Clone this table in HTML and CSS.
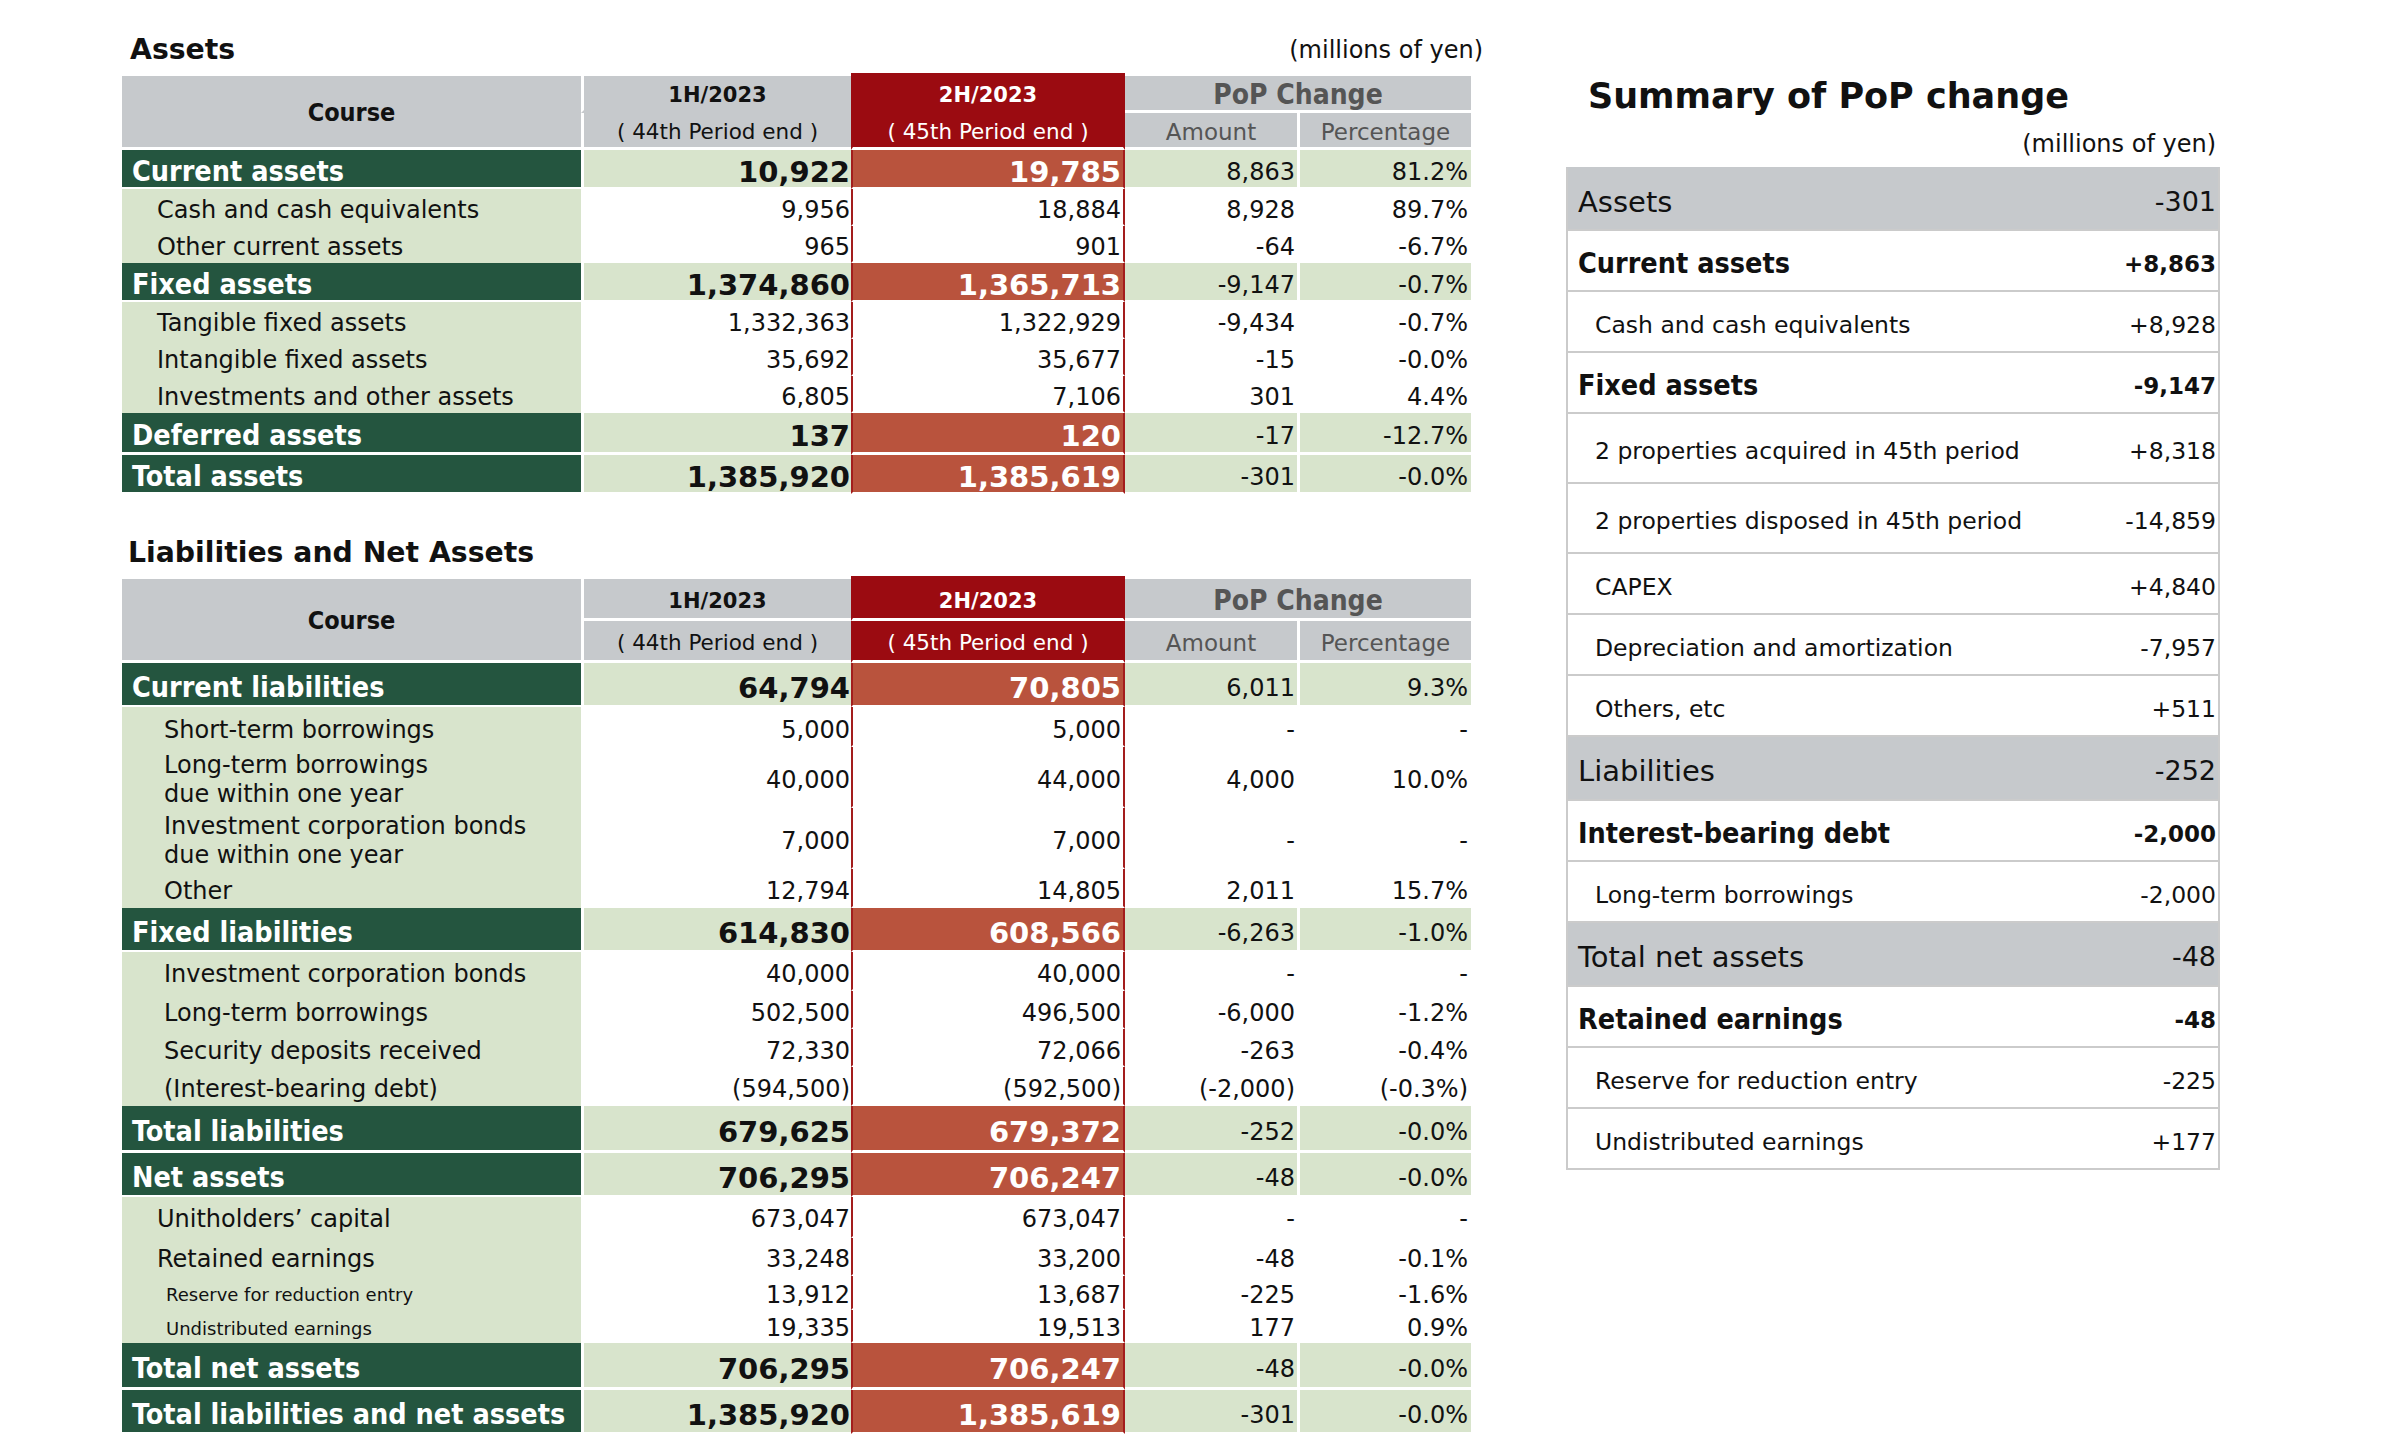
FILE: index.html
```html
<!DOCTYPE html>
<html lang="en">
<head>
<meta charset="utf-8">
<title>Balance sheet</title>
<link rel="stylesheet" href="styles.css">
</head>
<body>
<div class="page">
  <div class="left">
    <div class="sec-head">
      <h2 class="sec-title">Assets</h2>
      <span class="unit">(millions of yen)</span>
    </div>
    <table class="bs bs--assets">
      <colgroup><col class="w-label"><col class="w-1h"><col class="w-2h"><col class="w-amt"><col class="w-pct"></colgroup>
      <thead>
        <tr class="hr1">
          <th class="h-course" rowspan="2">Course</th>
          <th class="h-1h">1H/2023</th>
          <th class="h-2h">2H/2023</th>
          <th class="h-pop" colspan="2">PoP Change</th>
        </tr>
        <tr class="hr2">
          <th class="h-1h-sub">( 44th Period end )</th>
          <th class="h-2h-sub">( 45th Period end )</th>
          <th class="h-amt">Amount</th>
          <th class="h-pct">Percentage</th>
        </tr>
      </thead>
      <tbody>
        <tr class="main"><td class="c-label">Current assets</td><td class="c-1h">10,922</td><td class="c-2h">19,785</td><td class="c-amt">8,863</td><td class="c-pct">81.2%</td></tr>
        <tr class="sub"><td class="c-label">Cash and cash equivalents</td><td class="c-1h">9,956</td><td class="c-2h">18,884</td><td class="c-amt">8,928</td><td class="c-pct">89.7%</td></tr>
        <tr class="sub"><td class="c-label">Other current assets</td><td class="c-1h">965</td><td class="c-2h">901</td><td class="c-amt">-64</td><td class="c-pct">-6.7%</td></tr>
        <tr class="main"><td class="c-label">Fixed assets</td><td class="c-1h">1,374,860</td><td class="c-2h">1,365,713</td><td class="c-amt">-9,147</td><td class="c-pct">-0.7%</td></tr>
        <tr class="sub"><td class="c-label">Tangible fixed assets</td><td class="c-1h">1,332,363</td><td class="c-2h">1,322,929</td><td class="c-amt">-9,434</td><td class="c-pct">-0.7%</td></tr>
        <tr class="sub"><td class="c-label">Intangible fixed assets</td><td class="c-1h">35,692</td><td class="c-2h">35,677</td><td class="c-amt">-15</td><td class="c-pct">-0.0%</td></tr>
        <tr class="sub"><td class="c-label">Investments and other assets</td><td class="c-1h">6,805</td><td class="c-2h">7,106</td><td class="c-amt">301</td><td class="c-pct">4.4%</td></tr>
        <tr class="main main--gap"><td class="c-label">Deferred assets</td><td class="c-1h">137</td><td class="c-2h">120</td><td class="c-amt">-17</td><td class="c-pct">-12.7%</td></tr>
        <tr class="main main--last"><td class="c-label">Total assets</td><td class="c-1h">1,385,920</td><td class="c-2h">1,385,619</td><td class="c-amt">-301</td><td class="c-pct">-0.0%</td></tr>
      </tbody>
    </table>

    <div class="sec-head sec-head--next">
      <h2 class="sec-title">Liabilities and Net Assets</h2>
    </div>
    <table class="bs bs--liab">
      <colgroup><col class="w-label"><col class="w-1h"><col class="w-2h"><col class="w-amt"><col class="w-pct"></colgroup>
      <thead>
        <tr class="hr1">
          <th class="h-course" rowspan="2">Course</th>
          <th class="h-1h">1H/2023</th>
          <th class="h-2h">2H/2023</th>
          <th class="h-pop" colspan="2">PoP Change</th>
        </tr>
        <tr class="hr2">
          <th class="h-1h-sub">( 44th Period end )</th>
          <th class="h-2h-sub">( 45th Period end )</th>
          <th class="h-amt">Amount</th>
          <th class="h-pct">Percentage</th>
        </tr>
      </thead>
      <tbody>
        <tr class="main"><td class="c-label">Current liabilities</td><td class="c-1h">64,794</td><td class="c-2h">70,805</td><td class="c-amt">6,011</td><td class="c-pct">9.3%</td></tr>
        <tr class="sub sub--r40"><td class="c-label c-label--deep">Short-term borrowings</td><td class="c-1h">5,000</td><td class="c-2h">5,000</td><td class="c-amt">-</td><td class="c-pct">-</td></tr>
        <tr class="sub sub--two"><td class="c-label c-label--deep c-label--two">Long-term borrowings<br>due within one year</td><td class="c-1h">40,000</td><td class="c-2h">44,000</td><td class="c-amt">4,000</td><td class="c-pct">10.0%</td></tr>
        <tr class="sub sub--two"><td class="c-label c-label--deep c-label--two">Investment corporation bonds<br>due within one year</td><td class="c-1h">7,000</td><td class="c-2h">7,000</td><td class="c-amt">-</td><td class="c-pct">-</td></tr>
        <tr class="sub sub--r39"><td class="c-label c-label--deep">Other</td><td class="c-1h">12,794</td><td class="c-2h">14,805</td><td class="c-amt">2,011</td><td class="c-pct">15.7%</td></tr>
        <tr class="main"><td class="c-label">Fixed liabilities</td><td class="c-1h">614,830</td><td class="c-2h">608,566</td><td class="c-amt">-6,263</td><td class="c-pct">-1.0%</td></tr>
        <tr class="sub sub--r39"><td class="c-label c-label--deep">Investment corporation bonds</td><td class="c-1h">40,000</td><td class="c-2h">40,000</td><td class="c-amt">-</td><td class="c-pct">-</td></tr>
        <tr class="sub sub--r38"><td class="c-label c-label--deep">Long-term borrowings</td><td class="c-1h">502,500</td><td class="c-2h">496,500</td><td class="c-amt">-6,000</td><td class="c-pct">-1.2%</td></tr>
        <tr class="sub sub--r38"><td class="c-label c-label--deep">Security deposits received</td><td class="c-1h">72,330</td><td class="c-2h">72,066</td><td class="c-amt">-263</td><td class="c-pct">-0.4%</td></tr>
        <tr class="sub sub--r39"><td class="c-label c-label--deep">(Interest-bearing debt)</td><td class="c-1h">(594,500)</td><td class="c-2h">(592,500)</td><td class="c-amt">(-2,000)</td><td class="c-pct">(-0.3%)</td></tr>
        <tr class="main main--gap"><td class="c-label">Total liabilities</td><td class="c-1h">679,625</td><td class="c-2h">679,372</td><td class="c-amt">-252</td><td class="c-pct">-0.0%</td></tr>
        <tr class="main"><td class="c-label">Net assets</td><td class="c-1h">706,295</td><td class="c-2h">706,247</td><td class="c-amt">-48</td><td class="c-pct">-0.0%</td></tr>
        <tr class="sub sub--r41 sub--mid"><td class="c-label">Unitholders’ capital</td><td class="c-1h">673,047</td><td class="c-2h">673,047</td><td class="c-amt">-</td><td class="c-pct">-</td></tr>
        <tr class="sub sub--r38 sub--mid"><td class="c-label">Retained earnings</td><td class="c-1h">33,248</td><td class="c-2h">33,200</td><td class="c-amt">-48</td><td class="c-pct">-0.1%</td></tr>
        <tr class="sub sub--r34 sub--tight"><td class="c-label c-label--small">Reserve for reduction entry</td><td class="c-1h">13,912</td><td class="c-2h">13,687</td><td class="c-amt">-225</td><td class="c-pct">-1.6%</td></tr>
        <tr class="sub sub--r33 sub--tight"><td class="c-label c-label--small">Undistributed earnings</td><td class="c-1h">19,335</td><td class="c-2h">19,513</td><td class="c-amt">177</td><td class="c-pct">0.9%</td></tr>
        <tr class="main main--gap"><td class="c-label">Total net assets</td><td class="c-1h">706,295</td><td class="c-2h">706,247</td><td class="c-amt">-48</td><td class="c-pct">-0.0%</td></tr>
        <tr class="main main--last"><td class="c-label">Total liabilities and net assets</td><td class="c-1h">1,385,920</td><td class="c-2h">1,385,619</td><td class="c-amt">-301</td><td class="c-pct">-0.0%</td></tr>
      </tbody>
    </table>
  </div>

  <div class="right">
    <h2 class="sum-title">Summary of PoP change</h2>
    <div class="sum-unit">(millions of yen)</div>
    <table class="sum">
      <tbody>
        <tr class="s-group s-first"><td>Assets</td><td class="s-val">-301</td></tr>
        <tr class="s-bold"><td>Current assets</td><td class="s-val">+8,863</td></tr>
        <tr class="s-sub"><td>Cash and cash equivalents</td><td class="s-val">+8,928</td></tr>
        <tr class="s-bold"><td>Fixed assets</td><td class="s-val">-9,147</td></tr>
        <tr class="s-sub s-tall"><td>2 properties acquired in 45th period</td><td class="s-val">+8,318</td></tr>
        <tr class="s-sub s-tall"><td>2 properties disposed in 45th period</td><td class="s-val">-14,859</td></tr>
        <tr class="s-sub"><td>CAPEX</td><td class="s-val">+4,840</td></tr>
        <tr class="s-sub"><td>Depreciation and amortization</td><td class="s-val">-7,957</td></tr>
        <tr class="s-sub"><td>Others, etc</td><td class="s-val">+511</td></tr>
        <tr class="s-group"><td>Liabilities</td><td class="s-val">-252</td></tr>
        <tr class="s-bold"><td>Interest-bearing debt</td><td class="s-val">-2,000</td></tr>
        <tr class="s-sub"><td>Long-term borrowings</td><td class="s-val">-2,000</td></tr>
        <tr class="s-group"><td>Total net assets</td><td class="s-val">-48</td></tr>
        <tr class="s-bold"><td>Retained earnings</td><td class="s-val">-48</td></tr>
        <tr class="s-sub"><td>Reserve for reduction entry</td><td class="s-val">-225</td></tr>
        <tr class="s-sub s-last"><td>Undistributed earnings</td><td class="s-val">+177</td></tr>
      </tbody>
    </table>
  </div>
</div>
</body>
</html>
```

FILE: styles.css
```css
* { box-sizing: border-box; }

body {
  margin: 0;
  background: #ffffff;
  color: #111111;
  font-family: "DejaVu Sans", "Verdana", sans-serif;
}

.page {
  display: flex;
  align-items: flex-start;
  padding-left: 122px;
}

/* ---------- left column ---------- */
.left {
  width: 1361px;
  padding-top: 33px;
}

.sec-head {
  display: flex;
  justify-content: space-between;
  align-items: center;
  height: 34px;
  margin-bottom: 6px;
  padding-left: 8px;
}

.sec-head--next {
  margin-top: 42px;
  margin-bottom: 6px;
  padding-left: 6px;
}

.sec-title {
  margin: 0;
  font-family: "DejaVu Sans", sans-serif;
  font-weight: bold;
  font-size: 28.3px;
  line-height: 34px;
  color: #111;
}

.unit {
  font-size: 24px;
  line-height: 30px;
}

.bs {
  width: 1349px;
  border-collapse: separate;
  border-spacing: 0;
  table-layout: fixed;
}

.w-label { width: 459px; }
.w-1h { width: 270px; }
.w-2h { width: 274px; }
.w-amt { width: 172px; }
.w-pct { width: 174px; }

/* header */
.bs th {
  padding: 4px 0 0;
  font-weight: normal;
  text-align: center;
  vertical-align: middle;
  white-space: nowrap;
  background: #c6c9cc;
  line-height: 24px;
}

.bs th.h-course {
  border-top: 3px solid #fff;
  border-bottom: 3px solid #fff;
  font-family: "DejaVu Sans Condensed", "DejaVu Sans", sans-serif;
  font-stretch: condensed;
  font-weight: bold;
  font-size: 25px;
  line-height: 26px;
  padding-top: 3px;
}

.h-1h, .h-1h-sub, .h-2h, .h-2h-sub { border-left: 3px solid #fff; }

.h-1h, .h-2h, .h-pop { border-top: 3px solid #fff; }

.bs th.h-1h, .bs th.h-2h {
  font-weight: bold;
  font-size: 21px;
}

.h-1h { border-bottom: 3px solid #c6c9cc; }

.bs th.h-2h, .bs th.h-2h-sub {
  background: #9b0b11;
  color: #fff;
  border-left: 2px solid #9b0b11;
  border-right: 2px solid #9b0b11;
}

.h-2h {
  border-top: 3px solid #9b0b11;
  border-bottom: 3px solid #9b0b11;
}

.h-1h-sub, .h-2h-sub, .h-amt, .h-pct {
  font-size: 21.5px;
  border-bottom: 3px solid #fff;
}

.bs th.h-pop {
  border-bottom: 3px solid #fff;
  font-family: "DejaVu Sans Condensed", "DejaVu Sans", sans-serif;
  font-stretch: condensed;
  font-weight: bold;
  font-size: 28px;
  line-height: 28px;
  color: #555;
}

.h-amt, .h-pct {
  font-size: 23px;
  color: #555;
}

.h-pct { border-left: 3px solid #fff; }

.bs--assets .hr1 { height: 40px; }
.bs--assets .hr2 { height: 37px; }

.bs--liab .hr1 { height: 45px; }
.bs--liab .hr2 { height: 42px; }
.bs--liab .h-1h { border-bottom: 3px solid #fff; }
.bs--liab .h-2h { border-bottom: 3px solid #fff; }
.bs--liab th { padding-top: 5px; }

/* body */
.bs td {
  padding: 6px 0 0;
  border-bottom: 2px solid #fff;
  vertical-align: middle;
  white-space: nowrap;
  font-size: 24px;
  line-height: 24px;
}

.c-label { text-align: left; }
.bs td.c-1h { text-align: right; padding-right: 1px; border-left: 3px solid #fff; }
.bs td.c-2h {
  text-align: right;
  padding-right: 2px;
  border-left: 2px solid #a31d1d;
  border-right: 2px solid #a31d1d;
}
.bs td.c-amt { text-align: right; padding-right: 2px; }
.bs td.c-pct { text-align: right; padding-right: 3px; border-left: 3px solid #fff; }

.bs .main td { padding-top: 7px; }

.bs .main td.c-label {
  background: #24553f;
  color: #fff;
  padding-left: 10px;
  font-family: "DejaVu Sans Condensed", "DejaVu Sans", sans-serif;
  font-stretch: condensed;
  font-weight: bold;
  font-size: 28.5px;
  line-height: 30px;
}

.main .c-1h, .main .c-amt, .main .c-pct { background: #d8e4cc; }

.bs .main td.c-1h, .bs .main td.c-2h {
  font-weight: bold;
  font-size: 29px;
  line-height: 30px;
}

.bs .main td.c-2h { background: #b9533d; color: #fff; }

.bs .sub td.c-label {
  background: #d8e4cc;
  border-bottom: 0;
  padding-left: 35px;
  padding-top: 4px;
}

.bs .sub td.c-label--deep { padding-left: 42px; }
.bs .sub td.c-label--two { line-height: 28.5px; padding-top: 4px; }
.bs .sub td.c-label--small { padding-left: 44px; font-size: 18px; padding-top: 3px; }
.bs .sub--tight td { padding-top: 4px; }

.bs--liab td { padding-top: 7px; }
.bs--liab .main td { padding-top: 8px; }
.bs--liab .sub td.c-label { padding-top: 5px; }

.bs--assets .main { height: 39px; }
.bs--assets .sub { height: 37px; }
.bs--assets .main--gap { height: 42px; }
.bs--assets .main--gap td { border-bottom-width: 3px; }
.bs--assets .main--last { height: 38px; }

.bs--liab .main { height: 44px; }
.bs--liab .main--gap { height: 47px; }
.bs--liab .main--gap td { border-bottom-width: 3px; }
.bs--liab .main--last { height: 44px; }
.bs--liab .sub--r40 { height: 40px; }
.bs--liab .sub--r41 { height: 41px; }
.bs--liab .sub--r39 { height: 39px; }
.bs--liab .sub--r38 { height: 38px; }
.bs--liab .sub--r34 { height: 34px; }
.bs--liab .sub--r33 { height: 33px; }
.bs--liab .sub--two { height: 61px; }
.bs--liab .sub--tight td { padding-top: 5px; }
.bs--liab .sub--tight td.c-label--small { padding-top: 4px; }
.bs--liab .sub td.c-label--two { padding-top: 4px; }
.bs--liab .sub--mid td { padding-top: 5px; }
.bs--liab .sub--mid td.c-label { padding-top: 3px; }

/* ---------- right column ---------- */
.right {
  width: 654px;
  margin-left: 83px;
  padding-top: 75px;
}

.sum-title {
  margin: 0;
  padding-left: 22px;
  font-family: "DejaVu Sans", sans-serif;
  font-weight: bold;
  font-size: 35px;
  line-height: 42px;
  color: #111;
}

.sum-unit {
  margin-top: 12px;
  padding-right: 4px;
  text-align: right;
  font-size: 24px;
  line-height: 30px;
}

.sum {
  margin-top: 8px;
  width: 654px;
  border-collapse: separate;
  border-spacing: 0;
  border: 2px solid #cbcbcb;
  border-top-color: #c6c9cc;
}

.sum td {
  padding: 6px 0 0 10px;
  border-bottom: 2px solid #cbcbcb;
  vertical-align: middle;
  white-space: nowrap;
  font-size: 23.5px;
  line-height: 26px;
}

.sum td.s-val {
  text-align: right;
  padding-left: 0;
  padding-right: 2px;
}

.s-group { height: 64px; }
.sum .s-group td { background: #c6c9cc; font-size: 29px; line-height: 32px; }
.sum .s-group td.s-val { font-size: 27px; }
.s-first { height: 62px; }

.s-bold { height: 61px; }
.sum .s-bold td {
  font-family: "DejaVu Sans Condensed", "DejaVu Sans", sans-serif;
  font-stretch: condensed;
  font-weight: bold;
  font-size: 28.5px;
  line-height: 30px;
}
.sum .s-bold td.s-val {
  font-family: "DejaVu Sans", sans-serif;
  font-stretch: normal;
  font-size: 23px;
}

.s-sub { height: 61px; }
.sum .s-sub td:first-child { padding-left: 27px; }
.s-tall { height: 70px; }
.sum .s-last td { border-bottom: none; }
.s-last { height: 59px; }
```
